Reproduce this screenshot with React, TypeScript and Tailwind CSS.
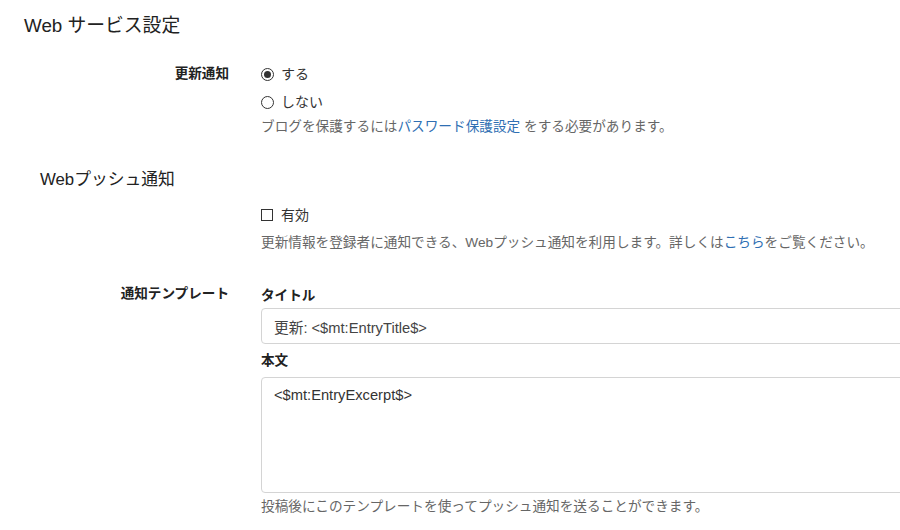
import { ReactNode } from "react";

interface FieldRowProps {
  label?: string;
  children: ReactNode;
}

function FieldRow({ label, children }: FieldRowProps) {
  return (
    <div className="flex">
      <div className="w-[205px] shrink-0 text-right text-[13.6px] font-bold leading-5 text-[#222]">
        {label}
      </div>
      <div className="ml-8 flex-1">{children}</div>
    </div>
  );
}

function Radio({ checked, label }: { checked?: boolean; label: string }) {
  return (
    <label className="flex h-5 items-center gap-[7px]">
      <span className="flex h-[13px] w-[13px] items-center justify-center rounded-full border border-[#333] bg-white">
        {checked && <span className="h-[7px] w-[7px] rounded-full bg-[#333]" />}
      </span>
      <span className="text-[14px] text-[#333]">{label}</span>
    </label>
  );
}

export default function App() {
  return (
    <div className="h-[530px] w-[900px] overflow-hidden bg-white">
      <div className="w-[940px] pl-6 text-[13.65px] text-[#333] font-['Liberation_Sans','Noto_Sans_CJK_JP',sans-serif]">
        <h1 className="pt-[13px] text-[18.8px] leading-[26px] text-[#222]">
          Web サービス設定
        </h1>

        <div className="mt-[25px]">
          <FieldRow label="更新通知">
            <Radio checked label="する" />
            <div className="mt-2">
              <Radio label="しない" />
            </div>
            <p className="mt-[5px] leading-5 text-[#666]">
              ブログを保護するには
              <a href="#" className="text-[#2f6fb3]">
                パスワード保護設定
              </a>{" "}
              をする必要があります。
            </p>
          </FieldRow>
        </div>

        <h2 className="mt-[31px] pl-4 text-[16.8px] leading-6 text-[#222]">
          Webプッシュ通知
        </h2>

        <div className="mt-[13px]">
          <FieldRow>
            <label className="flex h-5 items-center gap-[8px]">
              <span className="h-[12px] w-[12px] border border-[#333] bg-white" />
              <span className="text-[14px] text-[#333]">有効</span>
            </label>
            <p className="mt-[8px] leading-5 text-[#666]">
              更新情報を登録者に通知できる、Webプッシュ通知を利用します。詳しくは
              <a href="#" className="text-[#2f6fb3]">
                こちら
              </a>
              をご覧ください。
            </p>
          </FieldRow>
        </div>

        <div className="mt-[31px]">
          <FieldRow label="通知テンプレート">
            <div className="mt-[2px] text-[13.6px] font-bold leading-5 text-[#222]">
              タイトル
            </div>
            <input
              readOnly
              value="更新: <$mt:EntryTitle$>"
              className="mt-[2px] h-[36px] w-full rounded-[4px] border border-[#d4d4d4] px-3 text-[14.7px] text-[#444] outline-none"
            />
            <div className="mt-[7px] text-[13.6px] font-bold leading-5 text-[#222]">
              本文
            </div>
            <textarea
              readOnly
              value="<$mt:EntryExcerpt$>"
              className="mt-[6px] block h-[116px] w-full resize-none rounded-[4px] border border-[#d4d4d4] px-3 pt-[7px] text-[14.7px] leading-5 text-[#333] outline-none"
            />
            <p className="mt-[4px] leading-5 text-[#666]">
              投稿後にこのテンプレートを使ってプッシュ通知を送ることができます。
            </p>
          </FieldRow>
        </div>
      </div>
    </div>
  );
}
